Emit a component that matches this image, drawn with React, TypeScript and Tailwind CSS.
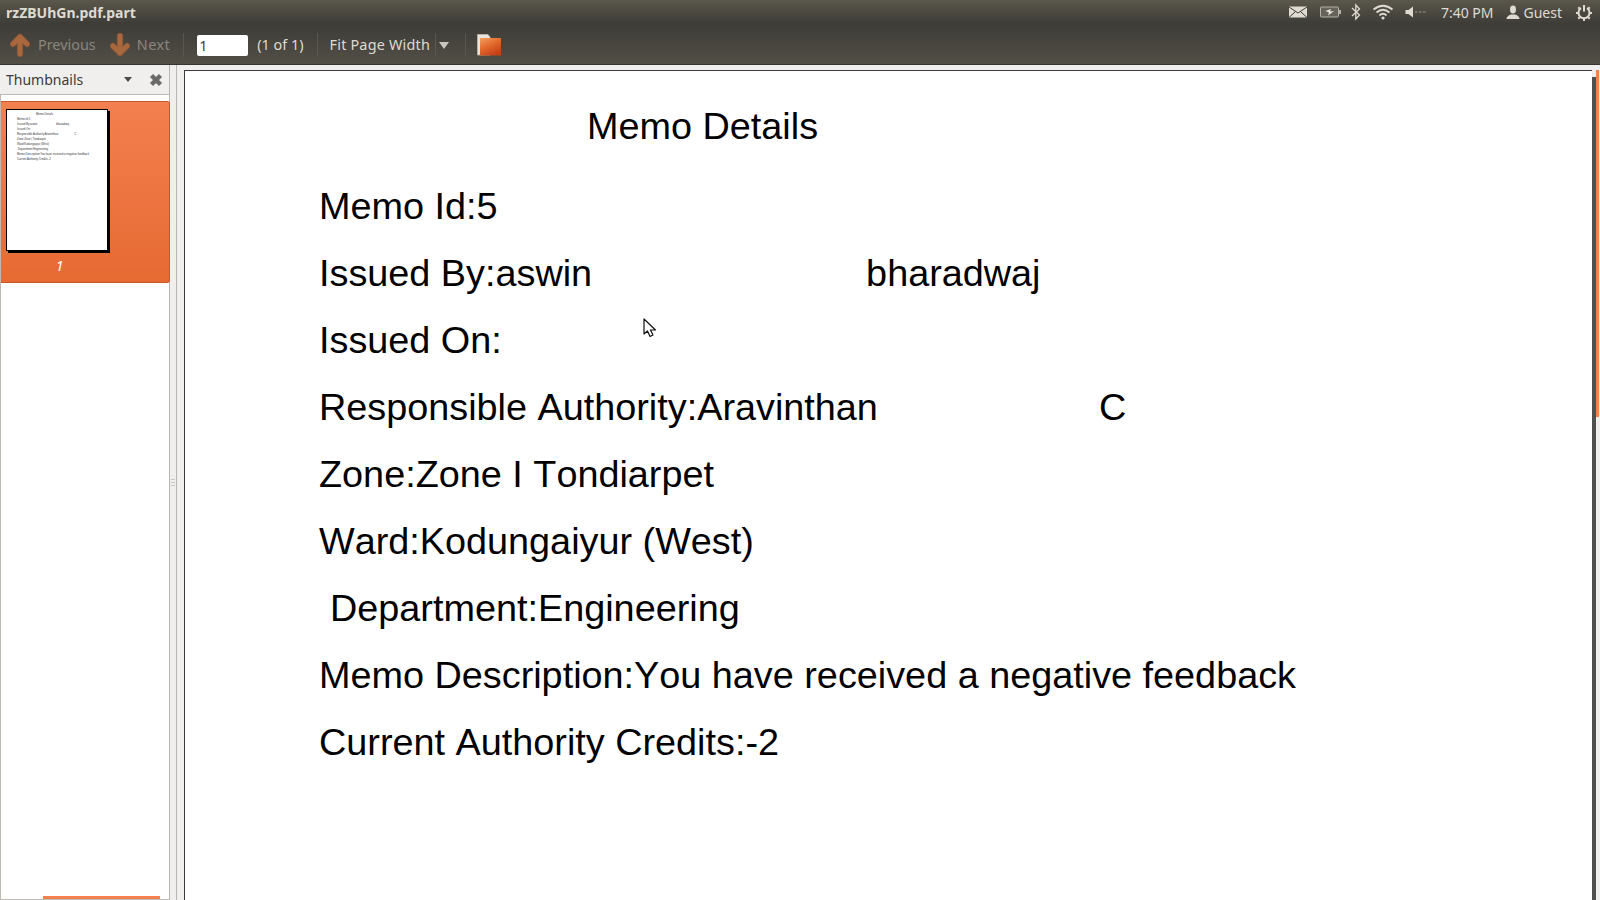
const ubuntu = { fontFamily: '"Noto Sans", sans-serif' };

function ArrowIcon({ down }: { down?: boolean }) {
  return (
    <svg width="20" height="24" viewBox="0 0 20 24" className={down ? "rotate-180" : ""}>
      <path d="M10 4 V21 M3 11 L10 4 L17 11" fill="none" stroke="#7d5236" strokeWidth="6.4" strokeLinecap="round" strokeLinejoin="round" />
      <path d="M10 4 V21 M3 11 L10 4 L17 11" fill="none" stroke="#a9673e" strokeWidth="4.8" strokeLinecap="round" strokeLinejoin="round" />
    </svg>
  );
}

function FolderIcon() {
  return (
    <svg width="24" height="22" viewBox="0 0 24 22">
      <defs>
        <linearGradient id="folderFront" x1="0" y1="0" x2="0.6" y2="1">
          <stop offset="0" stopColor="#f0a060" />
          <stop offset="0.5" stopColor="#e36a2c" />
          <stop offset="1" stopColor="#c8401a" />
        </linearGradient>
      </defs>
      <path d="M0.5 0.5 H11 L13 3 V21 H0.5 Z" fill="#e9e4dc" stroke="#b9aea3" strokeWidth="1" />
      <rect x="3" y="4" width="21" height="17.5" fill="url(#folderFront)" />
    </svg>
  );
}

function TrayIcons() {
  return (
    <>
      <svg width="20" height="14" viewBox="0 0 20 14" className="mr-[12px]">
        <rect x="1" y="1.5" width="18" height="11" fill="#dfdbd2" />
        <path d="M1 2 L10 8 L19 2 M1 12.5 L7.5 6.5 M19 12.5 L12.5 6.5" fill="none" stroke="#3c3b37" strokeWidth="1" />
      </svg>
      <svg width="22" height="14" viewBox="0 0 22 14" className="mr-[8px]">
        <rect x="0.5" y="2" width="18" height="10" rx="1" fill="#66635a" stroke="#b5b2a8" strokeWidth="1" />
        <rect x="19" y="5" width="2" height="4" fill="#b5b2a8" />
        <path d="M5.5 6 L11 4 L10 6.5 L14 6 L8 10.5 L9 7.5 Z" fill="#efebe2" />
      </svg>
      <svg width="12" height="18" viewBox="0 0 12 18" className="mr-[10px]">
        <path d="M2 5 L9.5 12 L5.8 16 V2 L9.5 6 L2 13" fill="none" stroke="#dfdbd2" strokeWidth="1.3" />
      </svg>
      <svg width="22" height="16" viewBox="0 0 22 16" className="mr-[11px]">
        <path d="M1.5 5.5 Q11 -2 20.5 5.5" fill="none" stroke="#dfdbd2" strokeWidth="1.8" />
        <path d="M4.5 8.5 Q11 3 17.5 8.5" fill="none" stroke="#dfdbd2" strokeWidth="1.8" />
        <path d="M7.5 11.5 Q11 8 14.5 11.5" fill="none" stroke="#dfdbd2" strokeWidth="1.8" />
        <circle cx="11" cy="14" r="1.6" fill="#dfdbd2" />
      </svg>
      <svg width="21" height="12" viewBox="0 0 21 12" className="mr-[15px]">
        <path d="M0.5 4 H3.5 L8 0.5 V11.5 L3.5 8 H0.5 Z" fill="#dfdbd2" />
        <path d="M10 6 H12.5 M14 6 H16.5 M18 6 H20.5" stroke="#9b9890" strokeWidth="1" />
      </svg>
    </>
  );
}

function TopBar() {
  return (
    <div className="h-[24px] flex items-center bg-gradient-to-b from-[#5b574b] to-[#3d3c37] pl-[6px] pr-[7px]">
      <div className="text-[14px] font-bold text-[#dfdbd2] flex-1" style={ubuntu}>
        rzZBUhGn.pdf.part
      </div>
      <TrayIcons />
      <span className="text-[14px] text-[#dfdbd2] mr-[12px]" style={ubuntu}>7:40 PM</span>
      <svg width="14" height="15" viewBox="0 0 14 15" className="mr-[4px]">
        <ellipse cx="7" cy="4.5" rx="3" ry="4" fill="#dfdbd2" />
        <path d="M0.5 14 Q0.5 11 5 9.5 H9 Q13.5 11 13.5 14 Z" fill="#dfdbd2" />
      </svg>
      <span className="text-[14px] text-[#dfdbd2] mr-[13px]" style={ubuntu}>Guest</span>
      <svg width="18" height="18" viewBox="0 0 18 18">
        <path d="M6 5.2 A5.5 5.5 0 1 0 12 5.2" fill="none" stroke="#dfdbd2" strokeWidth="2" />
        <path d="M9 2 V8.5" stroke="#dfdbd2" strokeWidth="2" />
        <path d="M1 10 H3 M15 10 H17 M3.3 4.3 L4.7 5.7 M14.7 4.3 L13.3 5.7 M3.3 15.7 L4.7 14.3 M14.7 15.7 L13.3 14.3 M9 16 V18" stroke="#dfdbd2" strokeWidth="2" />
      </svg>
    </div>
  );
}

function ToolBar() {
  return (
    <div className="h-[41px] pt-[2px] flex items-center bg-gradient-to-b from-[#3d3c37] to-[#514f46] border-b border-[#35342f] text-[14.4px]" style={ubuntu}>
      <div className="ml-[10px]"><ArrowIcon /></div>
      <span className="ml-[8px] text-[#8a877e]">Previous</span>
      <div className="ml-[14px]"><ArrowIcon down /></div>
      <span className="ml-[7px] text-[#8a877e] tracking-[0.5px]">Next</span>
      <div className="ml-[13px] w-px h-[24px] bg-[#5a584e]" />
      <div className="ml-[13px] w-[51px] h-[21px] bg-white rounded-[2px] text-[#3c3b37] pl-[2px] leading-[21px]">1</div>
      <span className="ml-[9px] text-[#dfdbd2]">(1 of 1)</span>
      <div className="ml-[13px] w-px h-[24px] bg-[#5a584e]" />
      <span className="ml-[12px] text-[#dfdbd2] tracking-[0.2px]">Fit Page Width</span>
      <div className="ml-[5px] w-px h-[24px] bg-[#5a584e]" />
      <svg width="10" height="7" viewBox="0 0 10 7" className="ml-[3px]">
        <path d="M0 0 H10 L5 7 Z" fill="#c9c6bd" />
      </svg>
      <div className="ml-[16px] w-px h-[24px] bg-[#5a584e]" />
      <div className="ml-[11px]"><FolderIcon /></div>
    </div>
  );
}

const memoLines = [
  "Memo Id:5",
  "Issued By:aswin",
  "Issued On:",
  "Responsible Authority:Aravinthan",
  "Zone:Zone I Tondiarpet",
  "Ward:Kodungaiyur (West)",
  " Department:Engineering",
  "Memo Description:You have received a negative feedback",
  "Current Authority Credits:-2",
];

function Thumb() {
  return (
    <div className="w-[102px] h-[142px] bg-white border-[1px] border-black shadow-[2px_2px_0_#000] pt-[3px] leading-none text-[#333]" style={{ fontFamily: '"Liberation Sans", sans-serif' }}>
      <div className="text-[2.8px] h-[5px] pl-[29px]">Memo Details</div>
      <div className="pl-[10px] text-[2.8px]">
        {memoLines.map((l) => (
          <div key={l} className="h-[5px] whitespace-pre">
            {l}
            {l === "Issued By:aswin" ? <span className="ml-[19px]">bharadwaj</span> : null}
            {l.startsWith("Responsible") ? <span className="ml-[16px]">C</span> : null}
          </div>
        ))}
      </div>
    </div>
  );
}

function Sidebar() {
  return (
    <div className="w-[170px] shrink-0 h-full flex flex-col border-r border-[#b8b6b0]">
      <div className="h-[29px] shrink-0 flex items-center pl-[6px] text-[14px] text-[#3c3b37]" style={ubuntu}>
        <span className="flex-1">Thumbnails</span>
        <svg width="8" height="5" viewBox="0 0 8 5" className="mr-[17px]">
          <path d="M0 0 H8 L4 5 Z" fill="#4c4c4c" />
        </svg>
        <svg width="14" height="14" viewBox="0 0 14 14" className="mr-[6px]">
          <path d="M2.5 2.5 L11.5 11.5 M11.5 2.5 L2.5 11.5" stroke="#6a6a68" strokeWidth="4.4" />
        </svg>
      </div>
      <div className="relative flex-1 bg-white border-t border-l border-b border-[#bdbab3] pt-[6px]">
        <div className="h-[182px] mr-[-1px] rounded-tr-[3px] rounded-br-[3px] bg-gradient-to-b from-[#f4804f] to-[#e66a32] border-t border-b border-r border-[#c7562a] pl-[5px] pt-[7px] flex flex-col">
          <Thumb />
          <div className="text-[14px] leading-[16px] italic text-white text-center w-[107px] mt-[7px]" style={ubuntu}>1</div>
        </div>
        <div className="absolute left-[42px] bottom-0 w-[117px] h-[3px] bg-[#f4804f]" />
      </div>
    </div>
  );
}

function Splitter() {
  return (
    <div className="w-[7px] shrink-0 h-full flex flex-col items-center justify-center gap-[2px] bg-[#f0efee] border-r border-[#b8b6b0]">
      <div className="w-[4px] h-px bg-[#c9c7c2]" />
      <div className="w-[4px] h-px bg-[#c9c7c2]" />
      <div className="w-[4px] h-px bg-[#c9c7c2]" />
    </div>
  );
}

function Row({ children, indent }: { children: React.ReactNode; indent?: boolean }) {
  return <div className={`h-[67px] flex items-center whitespace-pre ${indent ? "pl-[11px]" : ""}`}>{children}</div>;
}

function PdfPage() {
  return (
    <div className="relative flex-1 h-full bg-[#f0efee] pt-[5px] pl-[7px] flex">
      <div className="flex-1 h-[900px] bg-white border-t border-l border-[#3c3c3c] pt-[22px] text-[37.8px] [font-kerning:none] text-black overflow-hidden" style={{ fontFamily: '"Liberation Sans", sans-serif' }}>
        <div className="h-[67px] flex items-center pl-[402px]">Memo Details</div>
        <div className="pl-[134px] mt-[13px]">
          <Row>Memo Id:5</Row>
          <Row>Issued By:aswin<span className="ml-[274px]">bharadwaj</span></Row>
          <Row>Issued On:</Row>
          <Row>Responsible Authority:Aravinthan<span className="ml-[221px]">C</span></Row>
          <Row>Zone:Zone I Tondiarpet</Row>
          <Row>Ward:Kodungaiyur (West)</Row>
          <Row indent>Department:Engineering</Row>
          <Row>Memo Description:You have received a negative feedback</Row>
          <Row>Current Authority Credits:-2</Row>
        </div>
      </div>
      <div className="w-[4px] mt-[7px] bg-[#4f4f4f] shrink-0" />
      <div className="w-[4px] shrink-0 bg-[#f0efee]">
        <div className="w-[3px] h-[347px] bg-[#f4804f]" />
      </div>
      <svg width="14" height="21" viewBox="0 0 14 21" className="absolute left-[466px] top-[253px]">
        <path d="M1 1 V16 L4.5 13 L7 18.5 L10 17 L7.5 12 L12.5 12 Z" fill="#fff" stroke="#111" strokeWidth="1.2" strokeLinejoin="round" />
      </svg>
    </div>
  );
}

export default function App() {
  return (
    <div className="w-[1600px] h-[900px] overflow-hidden flex flex-col bg-[#f0efee]">
      <TopBar />
      <ToolBar />
      <div className="flex-1 flex min-h-0">
        <Sidebar />
        <Splitter />
        <PdfPage />
      </div>
    </div>
  );
}
